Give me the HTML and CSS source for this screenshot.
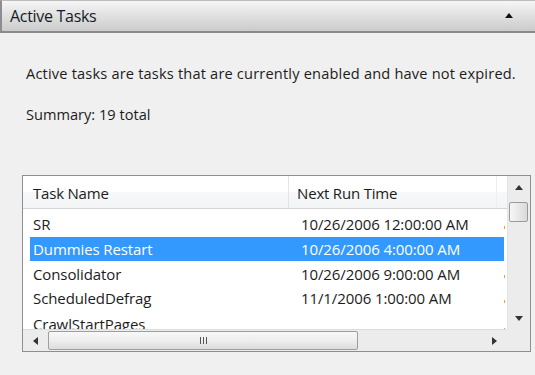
FILE: index.html
```html
<!DOCTYPE html>
<html>
<head>
<meta charset="utf-8">
<link rel="stylesheet" href="styles.css">
</head>
<body>
<div class="panel">
  <div class="titlebar">
    <span class="title">Active Tasks</span>
    <svg class="collapse" width="8" height="5" viewBox="0 0 8 5"><path d="M0 5 L4 0 L8 5 Z" fill="#111"/></svg>
  </div>
  <div class="content">
    <p class="desc">Active tasks are tasks that are currently enabled and have not expired.</p>
    <p class="summary">Summary: 19 total</p>
    <div class="listview">
      <div class="view">
        <div class="hdr">
          <div class="hcell c1">Task Name</div>
          <div class="hcell c2">Next Run Time</div>
          <div class="hcell c3"></div>
        </div>
        <div class="rows">
          <div class="row"><div class="cell c1">SR</div><div class="cell c2">10/26/2006 12:00:00 AM</div><div class="cell c3"><i class="dot"></i></div></div>
          <div class="row sel"><div class="cell c1">Dummies Restart</div><div class="cell c2">10/26/2006 4:00:00 AM</div><div class="cell c3"></div></div>
          <div class="row"><div class="cell c1">Consolidator</div><div class="cell c2">10/26/2006 9:00:00 AM</div><div class="cell c3"><i class="dot"></i></div></div>
          <div class="row"><div class="cell c1">ScheduledDefrag</div><div class="cell c2">11/1/2006 1:00:00 AM</div><div class="cell c3"><i class="dot"></i></div></div>
          <div class="row last"><div class="cell c1">CrawlStartPages</div><div class="cell c2"></div><div class="cell c3"><i class="dot"></i></div></div>
        </div>
      </div>
      <div class="vscroll">
        <div class="arrow"><svg width="8" height="5" viewBox="0 0 8 5"><path d="M0 5 L4 0 L8 5 Z" fill="#333"/></svg></div>
        <div class="vtrack"><div class="vthumb"></div></div>
        <div class="arrow"><svg width="8" height="5" viewBox="0 0 8 5"><path d="M0 0 L4 5 L8 0 Z" fill="#333"/></svg></div>
      </div>
      <div class="hscroll">
        <div class="harrow"><svg width="5" height="8" viewBox="0 0 5 8"><path d="M5 0 L0 4 L5 8 Z" fill="#333"/></svg></div>
        <div class="htrack"><div class="hthumb"><span class="grip"></span></div></div>
        <div class="harrow"><svg width="5" height="8" viewBox="0 0 5 8"><path d="M0 0 L5 4 L0 8 Z" fill="#333"/></svg></div>
      </div>
      <div class="corner"></div>
    </div>
  </div>
</div>
</body>
</html>
```
FILE: styles.css
```css
* { box-sizing: border-box; }
html, body { margin: 0; padding: 0; }
body {
  width: 535px;
  height: 375px;
  overflow: hidden;
  background: #f0f0f0;
  font-family: "Open Sans", "Noto Sans", sans-serif;
  color: #1c1c1c;
}
.panel { width: 535px; height: 375px; }
.titlebar {
  height: 33px;
  display: flex;
  align-items: center;
  justify-content: space-between;
  padding: 0 22px 0 8px;
  background: linear-gradient(#f6f6f6, #e2e2e2 45%, #cbcbcb);
  border-left: 2px solid #8d8d8d;
  border-top: 1px solid #bdbdbd;
  border-bottom: 2px solid #8a8a8a;
}
.title { font-size: 16px; color: #141c28; letter-spacing: -0.3px; }
.collapse { margin-top: -2px; }
.content { padding: 30px 0 0 26px; }
.desc { margin: 0; font-size: 14.6px; line-height: 20px; letter-spacing: 0.18px; }
.summary { margin: 21px 0 0; font-size: 14.6px; line-height: 20px; letter-spacing: 0; }
.listview {
  margin: 51px 0 0 -4px;
  width: 509px;
  height: 177px;
  border: 1px solid #8e8e8e;
  background: #fff;
  display: grid;
  grid-template-columns: 1fr 23px;
  grid-template-rows: 1fr 22px;
}
.view { overflow: hidden; background: #fff; }
.hdr {
  height: 33px;
  display: flex;
  background: linear-gradient(#ffffff, #ffffff 50%, #f7f8f9 50%, #f3f4f5);
  border-bottom: 1px solid #d5d5d5;
}
.hcell { font-size: 15px; line-height: 34px; letter-spacing: -0.2px; padding-left: 10px; }
.hcell.c1 { width: 270px; border-right: 1px solid #e3e4e6; }
.hcell.c2 { width: 211px; padding-left: 8px; border-right: 1px solid #eee; }
.hcell.c3 { flex: 1; }
.rows { padding-top: 3px; }
.row { display: flex; height: 24.7px; align-items: center; }
.row.last { align-items: flex-start; padding-top: 3px; }
.cell { font-size: 15px; letter-spacing: -0.1px; white-space: nowrap; }
.cell.c1 { width: 270px; padding-left: 10px; }
.cell.c2 { width: 211px; padding-left: 8px; }
.cell.c3 { flex: 1; position: relative; height: 100%; }
.dot { position: absolute; left: 0; top: 14px; width: 1px; height: 3px; background: #e8a040; }
.row.sel .c1, .row.sel .c2 { background: #3399ff; color: #fff; height: 100%; display: flex; align-items: center; }
.row.sel .c1 { margin-left: 7px; width: 263px; padding-left: 3px; }
.vscroll {
  background: #ececec;
  border-left: 1px solid #e4e4e4;
  display: flex;
  flex-direction: column;
}
.arrow { height: 22px; display: flex; align-items: center; justify-content: center; }
.vtrack { flex: 1; padding: 4px 2px 0 1px; }
.vthumb {
  height: 20px;
  border: 1px solid #9a9a9a;
  border-radius: 2px;
  background: linear-gradient(90deg, #f6f6f6, #e8e8e8 50%, #dadada);
}
.hscroll {
  background: #ececec;
  border-top: 1px solid #dcdcdc;
  display: flex;
  align-items: stretch;
}
.harrow { width: 25px; display: flex; align-items: center; justify-content: center; }
.htrack { flex: 1; padding: 1px 0 1px 0; }
.hthumb {
  width: 310px;
  height: 100%;
  border: 1px solid #9e9e9e;
  border-radius: 2px;
  background: linear-gradient(#f8f8f8, #eeeeee 50%, #dcdcdc);
  display: flex;
  align-items: center;
  justify-content: center;
}
.grip {
  width: 7px; height: 7px;
  background: repeating-linear-gradient(90deg, #555 0 1px, transparent 1px 3px);
}
.corner { background: #ececec; }
```
